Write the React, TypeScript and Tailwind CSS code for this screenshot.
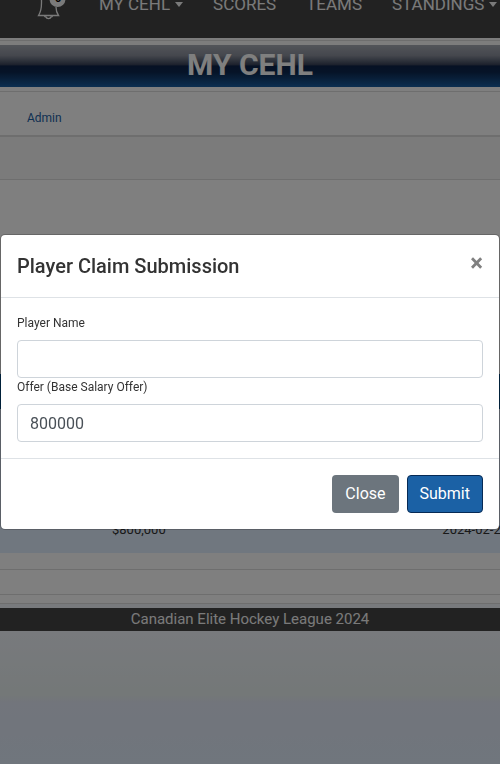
import { useState } from "react";

function Caret() {
  return (
    <span className="mb-[2px] ml-[5px] inline-block border-x-4 border-t-[5px] border-x-transparent border-t-current align-middle" />
  );
}

function BellIcon() {
  return (
    <svg width="32" height="32" viewBox="0 0 32 32" fill="none" stroke="currentColor" strokeWidth="1.3">
      <path d="M6.500 6v9c0 5-.8 9-3 12.500h20c-1.800-2.500-2.500-5-2.500-8.500" />
      <path d="M9.500 28c.3 1 1 1 1.500 1 .5 2.200 4.500 2.200 5 0 .5 0 1.200 0 1.500-1" />
      <circle cx="22.500" cy="11" r="8" fill="currentColor" stroke="none" />
    </svg>
  );
}

function NavBar() {
  return (
    <nav className="flex h-[38px] items-end overflow-hidden bg-[#444444] pb-[22px] pl-[35px] text-[17px] leading-6 whitespace-nowrap text-[#f5f5f5]">
      <a href="#alerts" aria-label="Notifications" className="relative -mb-[4px] mr-[32px] flex shrink-0">
        <BellIcon />
        <span className="absolute top-[3px] left-[20px] text-[11px] leading-4 font-bold text-black">0</span>
      </a>
      <a href="#cehl" className="mr-[30px]">MY CEHL<Caret /></a>
      <a href="#scores" className="mr-[30px]">SCORES</a>
      <a href="#teams" className="mr-[30px]">TEAMS</a>
      <a href="#standings">STANDINGS<Caret /></a>
    </nav>
  );
}

function Page() {
  return (
    <div className="h-full overflow-hidden bg-[linear-gradient(#f2f4f8_0%,#f0f4fa_83%,#e8f0f0_91%,#e4eaf8_92%,#e0ecfa_100%)]">
      <NavBar />
      <main className="bg-white">
        <div className="h-[7px] bg-[#fafafa] pt-[2px]">
          <hr className="border-[#dddddd]" />
        </div>
        <h1 className="h-[42px] bg-[linear-gradient(#a6aab4_0%,#8a8f9b_25%,#39435a_47%,#0c2248_50%,#0c2850_65%,#185ea2_100%)] text-center text-[30px] leading-[40px] font-bold text-white">
          MY CEHL
        </h1>
        <div className="flex h-[50px] flex-col border-b-2 border-[#dddddd]">
          <hr className="mt-1 border-[#dddddd]" />
          <a href="#admin" className="mt-[17px] ml-[27px] self-start text-[12px] leading-[18px] text-[#1c61a4]">Admin</a>
        </div>
        <div className="h-[43px] border-b border-[#dddddd] bg-[#f7f7f7]" />
        <div className="h-[194px]" />
        <div className="h-[35px] bg-[#00508e]" />
        <div className="flex h-[144px] items-end justify-between overflow-hidden bg-[#e0eefe] pb-[13px] pl-[112px] text-[13px] leading-5 text-[#333333]">
          <span>$800,000</span>
          <span className="-mr-[8px]">2024-02-23</span>
        </div>
        <div className="h-[17px] border-b border-[#dddddd]" />
        <div className="h-[25px] border-b border-[#dddddd]" />
        <div className="h-[9px] border-b border-[#dddddd]" />
      </main>
      <footer className="mt-1 h-[23px] bg-[#444444] text-center text-[15px] leading-[22px] text-[#f5f5f5]">
        Canadian Elite Hockey League 2024
      </footer>
    </div>
  );
}

const inputClass =
  "block h-[38px] w-full rounded border border-[#ced4da] bg-white px-3 text-base text-[#495057] outline-none";

function ClaimDialog() {
  const [player, setPlayer] = useState("");
  const [offer, setOffer] = useState("800000");
  return (
    <form
      role="dialog"
      aria-modal="true"
      aria-labelledby="claim-title"
      onSubmit={(e) => e.preventDefault()}
      className="w-full rounded-[5px] border border-black/20 bg-white bg-clip-padding text-[#333333]"
    >
      <div className="flex items-start justify-between border-b border-[#dee2e6] p-4">
        <h2 id="claim-title" className="text-[20px] leading-[30px] font-medium">Player Claim Submission</h2>
        <button type="button" aria-label="Dismiss" className="text-[24px] leading-6 font-bold text-[#808080]">×</button>
      </div>
      <div className="p-4 text-[12px] leading-[18px]">
        <label htmlFor="player" className="mb-2 block">Player Name</label>
        <input id="player" className={inputClass} value={player} onChange={(e) => setPlayer(e.target.value)} />
        <label htmlFor="offer" className="mb-2 block">Offer (Base Salary Offer)</label>
        <input id="offer" className={inputClass} value={offer} onChange={(e) => setOffer(e.target.value)} />
      </div>
      <div className="flex justify-end gap-2 border-t border-[#dee2e6] p-4 text-base leading-6 text-white">
        <button type="button" className="h-[38px] rounded bg-[#6c757d] px-[13px]">Close</button>
        <button type="submit" className="h-[38px] rounded border border-[#062a55] bg-[#1b61a5] px-3">Submit</button>
      </div>
    </form>
  );
}

export default function App() {
  return (
    <div className="h-screen overflow-hidden font-[Roboto,sans-serif]">
      <Page />
      <div className="fixed inset-0 flex items-center bg-black/50">
        <ClaimDialog />
      </div>
    </div>
  );
}
